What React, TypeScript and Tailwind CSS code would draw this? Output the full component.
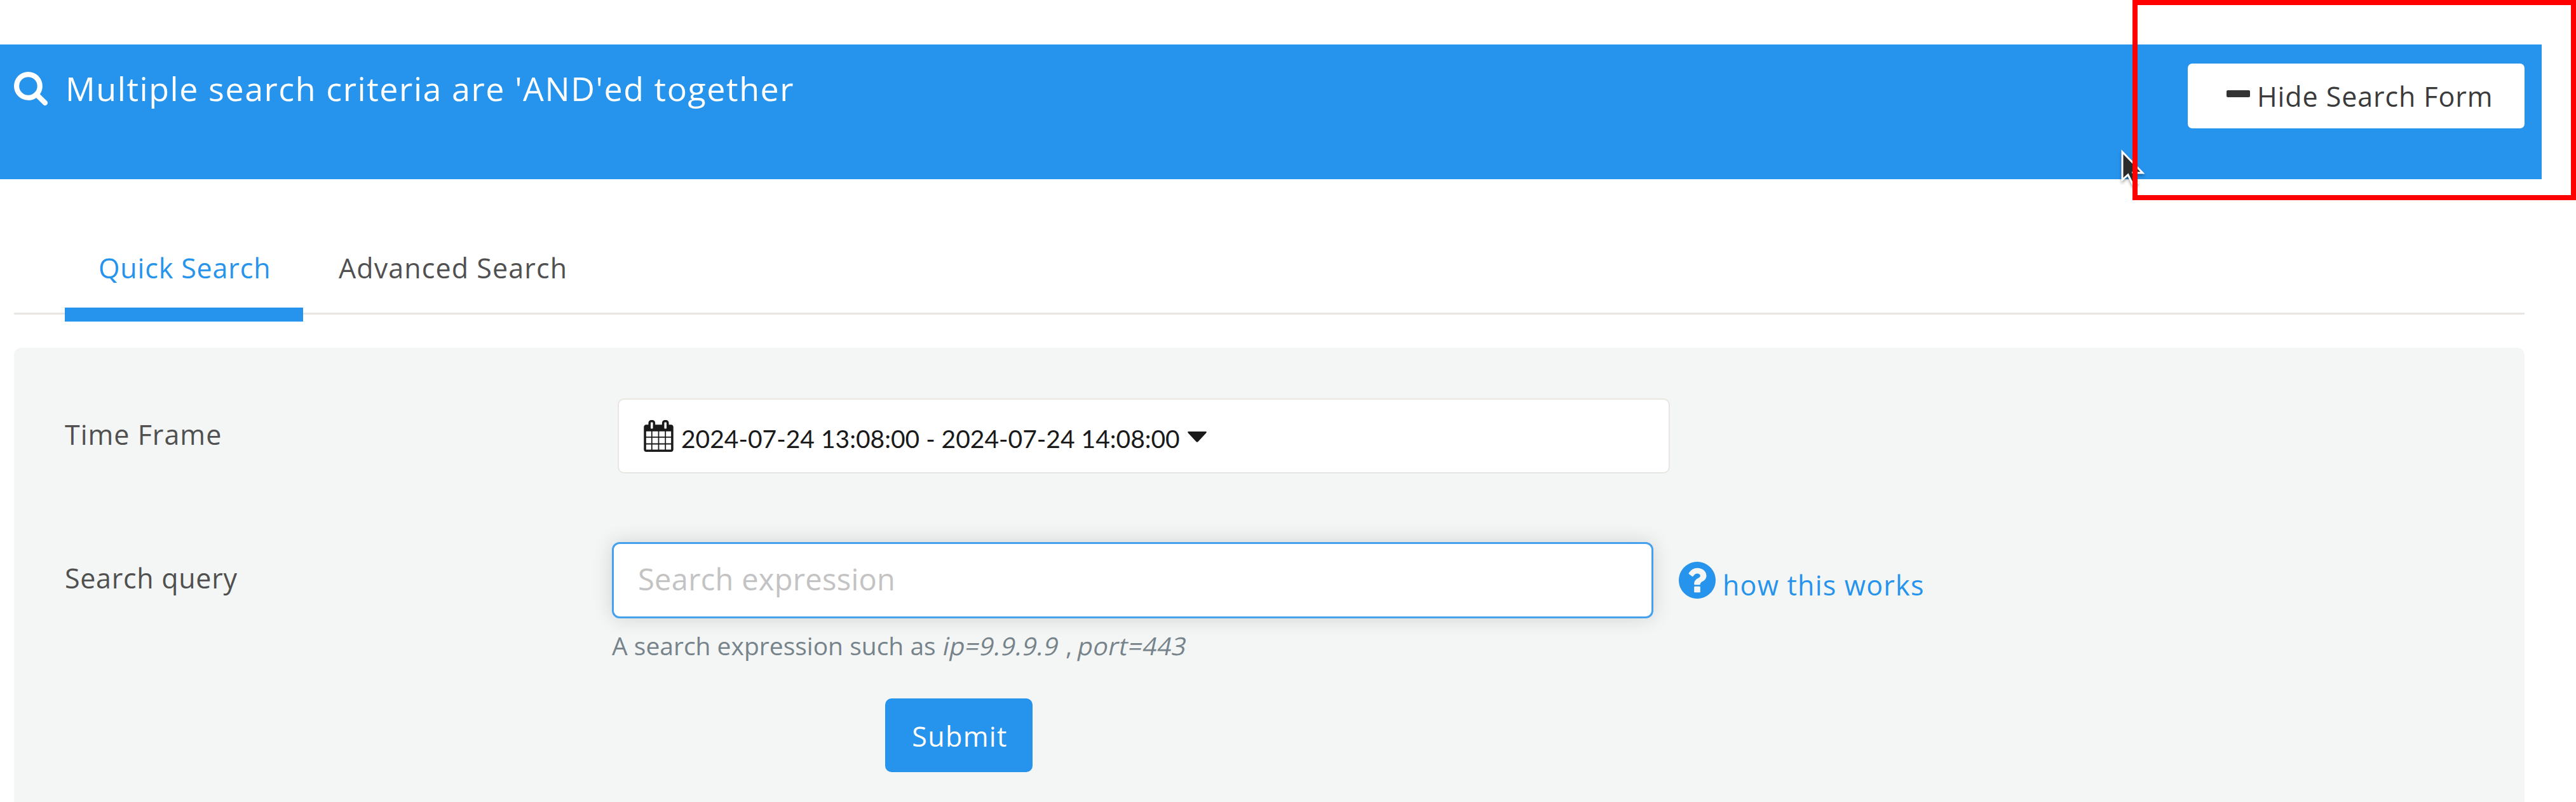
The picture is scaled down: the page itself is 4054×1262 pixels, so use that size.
import React from "react";

const SearchIcon = () => (
  <svg viewBox="64 128 1664 1664" className="mt-[43px] h-[53px] w-[53px] shrink-0 fill-white">
    <path d="M1216 832q0-185-131.5-316.5t-316.5-131.5-316.5 131.5-131.5 316.5 131.5 316.5 316.5 131.5 316.5-131.5 131.5-316.5zm512 832q0 52-38 90t-90 38q-54 0-90-38l-343-342q-179 124-399 124-143 0-273.5-55.5t-225-150-150-225-55.5-273.5 55.5-273.5 150-225 225-150 273.5-55.5 273.5 55.5 225 150 150 225 55.5 273.5q0 220-124 399l343 343q37 37 37 90z" />
  </svg>
);

const CalendarIcon = () => (
  <svg viewBox="64 0 1664 1792" className="h-[50px] w-[47px] shrink-0 fill-[#1a1a1a]">
    <path d="M192 1664h288v-288h-288v288zm352 0h320v-288h-320v288zm-352-352h288v-320h-288v320zm352 0h320v-320h-320v320zm-352-384h288v-288h-288v288zm736 736h320v-288h-320v288zm-384-736h320v-288h-320v288zm768 736h288v-288h-288v288zm-384-352h320v-320h-320v320zm-352-864v-288q0-13-9.5-22.5t-22.5-9.5h-64q-13 0-22.5 9.5t-9.5 22.5v288q0 13 9.5 22.5t22.5 9.5h64q13 0 22.5-9.5t9.5-22.5zm736 864h288v-320h-288v320zm-384-384h320v-288h-320v288zm384 0h288v-288h-288v288zm32-480v-288q0-13-9.5-22.5t-22.5-9.5h-64q-13 0-22.5 9.5t-9.5 22.5v288q0 13 9.5 22.5t22.5 9.5h64q13 0 22.5-9.5t9.5-22.5zm384-64v1280q0 52-38 90t-90 38h-1408q-52 0-90-38t-38-90v-1280q0-52 38-90t90-38h128v-96q0-66 47-113t113-47h64q66 0 113 47t47 113v96h384v-96q0-66 47-113t113-47h64q66 0 113 47t47 113v96h128q52 0 90 38t38 90z" />
  </svg>
);

const HelpIcon = () => (
  <svg viewBox="128 128 1536 1536" className="-mt-[7px] h-[58px] w-[58px] shrink-0 fill-[#2693ec]">
    <path d="M1024 1376v-192q0-14-9-23t-23-9h-192q-14 0-23 9t-9 23v192q0 14 9 23t23 9h192q14 0 23-9t9-23zm256-672q0-88-55.5-163t-138.5-116-170-41q-243 0-371 213-15 24 8 42l132 100q7 6 19 6 16 0 25-12 53-68 86-92 34-24 86-24 48 0 85.5 26t37.5 59q0 38-20 61t-68 45q-63 28-115.5 86.5t-52.5 125.5v36q0 14 9 23t23 9h192q14 0 23-9t9-23q0-19 21.5-49.5t54.5-49.5q32-18 49-28.5t46-35 44.5-48 28-60.5 12.5-81zm384 192q0 209-103 385.5t-279.5 279.5-385.5 103-385.5-103-279.5-279.5-103-385.5 103-385.5 279.5-279.5 385.5-103 385.5 103 279.5 279.5 103 385.5z" />
  </svg>
);

const Pointer = () => (
  <svg viewBox="0 0 40 60" className="absolute left-[3336px] top-[235px] h-[60px] w-[40px] drop-shadow-[0_3px_2px_rgba(0,0,0,0.35)]">
    <path d="M4 4V48L13 40L21 56L28 53L21 37H36Z" fill="#2b2b2b" stroke="#fff" strokeWidth="3" />
  </svg>
);

export default function App() {
  return (
    <div className="relative h-[1262px] w-[4054px] overflow-hidden bg-white pt-[70px] font-['Open_Sans',sans-serif] text-[43px] leading-[60px] text-[#505050]">
      <header className="flex h-[212px] w-[4000px] items-start bg-[#2693ec] pl-[22px] pr-[27px]">
        <SearchIcon />
        <h1 className="ml-[28px] mt-[39px] flex-1 whitespace-nowrap text-[52px] tracking-[1.55px] text-white">
          Multiple search criteria are 'AND'ed together
        </h1>
        <button className="mt-[30px] flex h-[102px] w-[530px] items-center rounded-[7px] bg-white pl-[61px] text-[#3b3b3b]">
          <span className="-mt-[7px] h-[11px] w-[37px] rounded-[2px] bg-[#333]" />
          <span className="ml-[11px] mt-[2px] whitespace-nowrap tracking-[0.9px]">Hide Search Form</span>
        </button>
      </header>

      <nav className="ml-[22px] flex h-[213px] w-[3951px] border-b-3 border-[#e9e6e2] pl-[80px] pt-[110px]">
        <div className="flex h-[114px] w-[375px] flex-col justify-between text-[#2693ec]">
          <span className="whitespace-nowrap pl-[53px] tracking-[0.85px]">Quick Search</span>
          <span className="h-[22px] bg-[#2693ec]" />
        </div>
        <span className="pl-[56px] tracking-[1.1px]">Advanced Search</span>
      </nav>

      <main className="ml-[22px] mt-[52px] h-[715px] w-[3951px] rounded-t-[12px] bg-[#f4f6f5] pl-[80px] pt-[80px]">
        <div className="flex h-[226px] items-start">
          <label className="mt-[27px] w-[870px] tracking-[1px]">Time Frame</label>
          <div className="flex h-[118px] w-[1656px] items-center rounded-[10px] border-2 border-[#e9e5e0] bg-white pl-[39px] text-[#1a1a1a]">
            <CalendarIcon />
            <span className="ml-[12px] mt-[7px] whitespace-nowrap font-['Lato',sans-serif] text-[39px]">
              2024-07-24 13:08:00 - 2024-07-24 14:08:00
            </span>
            <svg viewBox="0 0 30 17" className="ml-[12px] mt-[2px] h-[17px] w-[30px] fill-[#1a1a1a]">
              <path d="M1.5 0H28.5Q31 0 29 2.5L16.5 16Q15 17.5 13.5 16L1 2.5Q-1 0 1.5 0Z" />
            </svg>
          </div>
        </div>
        <div className="flex items-start">
          <label className="mt-[27px] w-[861px] tracking-[0.7px]">Search query</label>
          <div className="flex w-[1639px] flex-col">
            <input
              className="h-[120px] rounded-[12px] border-3 border-[#45a1ee] bg-white pb-[4px] pl-[38px] text-[47px] tracking-[0.3px] shadow-[0_0_32px_rgba(0,0,0,0.14)] placeholder:text-[#c3c3c3] focus:outline-none"
              placeholder="Search expression"
            />
            <p className="mt-[13px] h-[60px] whitespace-nowrap text-[39px] text-[#76838b]">
              A search expression such as{" "}
              <em className="ml-[2px] inline-block -skew-x-12 not-italic tracking-[0.6px]">ip=9.9.9.9</em> ,{" "}
              <em className="inline-block -skew-x-12 not-italic tracking-[0.6px]">port=443</em>
            </p>
            <button className="ml-[430px] mt-[53px] h-[116px] w-[232px] rounded-[10px] bg-[#2693ec] pl-[3px] pt-[3px] tracking-[1.4px] text-white">
              Submit
            </button>
          </div>
          <a className="ml-[40px] mt-[38px] flex text-[#2693ec]">
            <HelpIcon />
            <span className="ml-[11px] whitespace-nowrap tracking-[1.2px]">how this works</span>
          </a>
        </div>
      </main>

      <Pointer />
      <div className="absolute left-[3356px] top-0 h-[315px] w-[698px] border-8 border-[#ff0000]" />
    </div>
  );
}
